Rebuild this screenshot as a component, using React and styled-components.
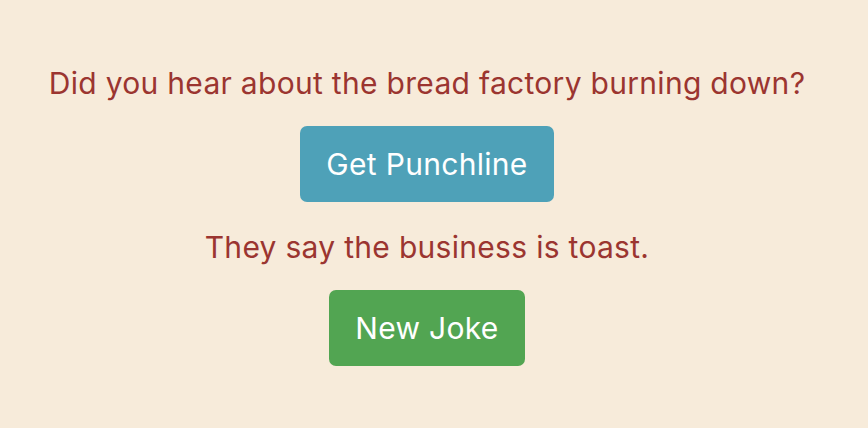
import React, { useState } from 'react'
import styled, { createGlobalStyle } from 'styled-components'

const GlobalStyle = createGlobalStyle`
  html, body {
    margin: 0;
    background: #f7ebda;
  }
  body {
    font-family: Inter, 'Noto Sans', sans-serif;
  }
`

const Page = styled.main`
  display: flex;
  flex-direction: column;
  align-items: center;
  padding: 62px 14px 0 0;
  min-height: 428px;
  box-sizing: border-box;
`

const Line = styled.p`
  margin: 0;
  color: #9b3530;
  font-size: 30px;
  letter-spacing: 0.3px;
  line-height: 42px;
  text-align: center;
`

const Button = styled.button`
  font-family: inherit;
  font-size: 30px;
  letter-spacing: 0.3px;
  line-height: 34px;
  color: #fff;
  background: ${props => props.color};
  border: none;
  border-radius: 7px;
  padding: 21px 26px;
  margin: 22px 0 24px;
  cursor: pointer;
`

export default function App() {
  const [shown, setShown] = useState(true)
  return (
    <Page>
      <GlobalStyle />
      <Line>Did you hear about the bread factory burning down?</Line>
      <Button color="#4ea1b8" onClick={() => setShown(true)}>Get Punchline</Button>
      {shown && <Line>They say the business is toast.</Line>}
      <Button color="#52a552" onClick={() => setShown(false)}>New Joke</Button>
    </Page>
  )
}
